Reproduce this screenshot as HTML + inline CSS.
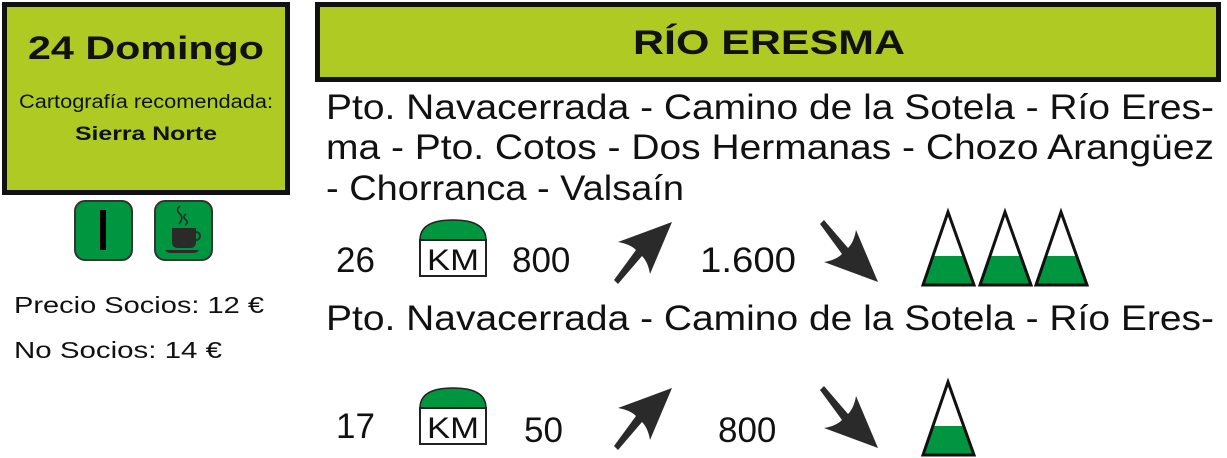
<!DOCTYPE html>
<html><head><meta charset="utf-8"><style>
html,body{margin:0;padding:0;background:#fff;width:1227px;height:458px;overflow:hidden}
svg{display:block}
text{font-family:"Liberation Sans",sans-serif;fill:#111}
</style></head><body>
<svg width="1227" height="458" viewBox="0 0 1227 458" xmlns="http://www.w3.org/2000/svg">
<defs>
<g id="km">
<path d="M2 20 Q2 0 35 0 Q68 0 68 20 Z" fill="#009640" stroke="#222" stroke-width="1.5"/>
<rect x="2" y="20" width="66" height="36" fill="#fff" stroke="#222" stroke-width="2"/>
<text x="35" y="50" font-size="30" text-anchor="middle" textLength="52" lengthAdjust="spacingAndGlyphs">KM</text>
</g>
<g id="up"><path d="M0 58 L4 62 L28 34 Q34 40 36 52 L58 0 L4 20 Q16 22 22 28 Z" fill="#2a2a2a"/></g>
<g id="dn"><path d="M0 4 L4 0 L28 28 Q34 22 36 10 L58 62 L4 42 Q16 40 22 34 Z" fill="#2a2a2a"/></g>
<g id="mt">
<path d="M3 75 L13 46 L43 46 L54 75 Z" fill="#009640"/>
<path d="M3 75 L28 2 L54 75 Z" fill="none" stroke="#111" stroke-width="3"/>
</g>
</defs>
<rect x="4.5" y="4.5" width="283" height="188" fill="#afca22" stroke="#111" stroke-width="5"/>
<text x="146" y="59" font-size="32" font-weight="bold" text-anchor="middle" textLength="236" lengthAdjust="spacingAndGlyphs">24 Domingo</text>
<text x="146" y="108" font-size="19" text-anchor="middle" textLength="254" lengthAdjust="spacingAndGlyphs">Cartografía recomendada:</text>
<text x="146" y="140" font-size="19" font-weight="bold" text-anchor="middle" textLength="142" lengthAdjust="spacingAndGlyphs">Sierra Norte</text>
<rect x="75" y="201" width="57" height="59" rx="10" fill="#009640" stroke="#333" stroke-width="2"/>
<rect x="100" y="210" width="6" height="40" fill="#000"/>
<rect x="155" y="201" width="57" height="59" rx="10" fill="#009640" stroke="#333" stroke-width="2"/>
<path d="M172 228 h24 v14 q0 6 -6 6 h-12 q-6 0 -6 -6 z" fill="#2a2a2a"/>
<path d="M196 232 a4 4 0 1 1 0 8" fill="none" stroke="#2a2a2a" stroke-width="2"/>
<path d="M165 250 h34 q-2 3 -6 3 h-22 q-4 0 -6 -3z" fill="#2a2a2a"/>
<path d="M180 206 q-5 4 0 8 q4 4 -1 10 M186 214 q-4 3 0 6 q3 3 -1 5" fill="none" stroke="#2a2a2a" stroke-width="1.6"/>
<text x="14" y="313" font-size="23" textLength="250" lengthAdjust="spacingAndGlyphs">Precio Socios: 12 €</text>
<text x="14" y="358" font-size="23" textLength="208" lengthAdjust="spacingAndGlyphs">No Socios: 14 €</text>
<rect x="317.5" y="4.5" width="901" height="75" fill="#afca22" stroke="#111" stroke-width="5"/>
<text x="769" y="54" font-size="34" font-weight="bold" text-anchor="middle" textLength="272" lengthAdjust="spacingAndGlyphs">RÍO ERESMA</text>
<g font-size="35">
<text x="326" y="119" textLength="888" lengthAdjust="spacingAndGlyphs">Pto. Navacerrada - Camino de la Sotela - Río Eres-</text>
<text x="326" y="159" textLength="888" lengthAdjust="spacingAndGlyphs">ma - Pto. Cotos - Dos Hermanas - Chozo Arangüez</text>
<text x="326" y="200" textLength="358" lengthAdjust="spacingAndGlyphs">- Chorranca - Valsaín</text>
<text x="336" y="272">26</text>
<text x="512" y="272">800</text>
<text x="700" y="272" textLength="96" lengthAdjust="spacingAndGlyphs">1.600</text>
<text x="326" y="330" textLength="888" lengthAdjust="spacingAndGlyphs">Pto. Navacerrada - Camino de la Sotela - Río Eres-</text>
<text x="336" y="438">17</text>
<text x="524" y="442">50</text>
<text x="718" y="442">800</text>
</g>
<use href="#km" x="418" y="220"/>
<use href="#up" x="614" y="222"/>
<use href="#dn" x="820" y="220"/>
<use href="#mt" x="920" y="210"/>
<use href="#mt" x="977" y="210"/>
<use href="#mt" x="1033" y="210"/>
<use href="#km" x="418" y="388"/>
<use href="#up" x="614" y="388"/>
<use href="#dn" x="820" y="386"/>
<use href="#mt" x="920" y="380"/>
</svg>
</body></html>
